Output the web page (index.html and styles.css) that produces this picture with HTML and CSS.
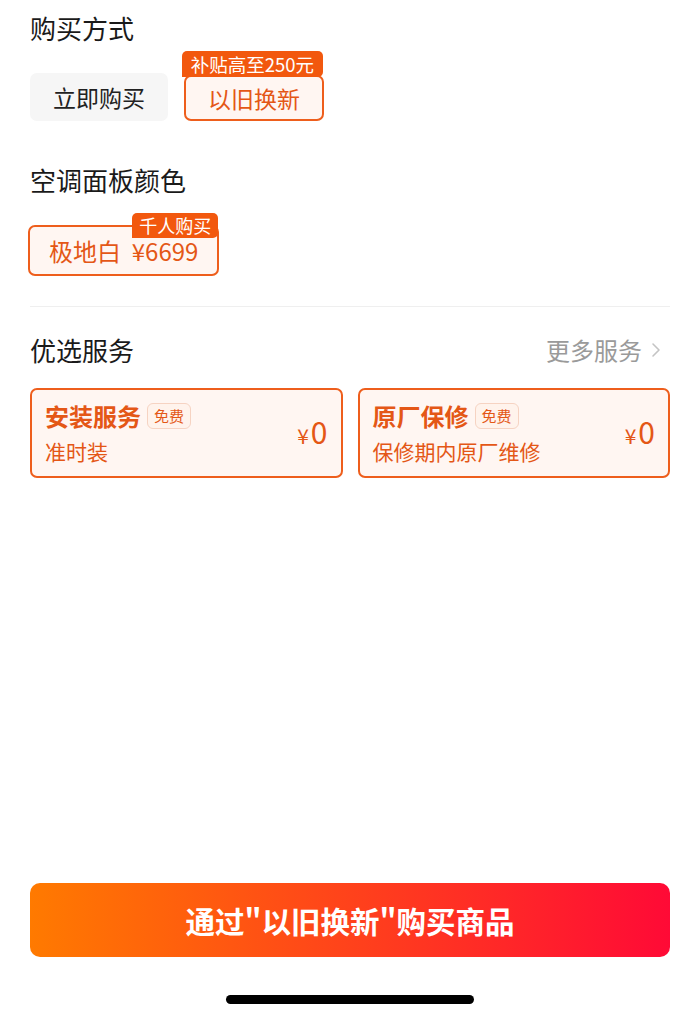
FILE: index.html
```html
<!DOCTYPE html>
<html lang="zh-CN">
<head>
  <meta charset="UTF-8">
  <meta name="viewport" content="width=device-width, initial-scale=1.0">
  <title>购买方式</title>
  <link rel="stylesheet" href="styles.css">
</head>
<body>
  <div class="page">
    <div class="main">
      <div class="sec-title first">购买方式</div>
      <div class="options">
        <div class="opt">立即购买</div>
        <div class="opt sel">以旧换新<span class="badge">补贴高至250元</span></div>
      </div>

      <div class="sec-title">空调面板颜色</div>
      <div class="options colors">
        <div class="opt sel color">极地白&nbsp;&nbsp;¥6699<span class="badge">千人购买</span></div>
      </div>

      <div class="divider"></div>

      <div class="sec-head">
        <div class="sec-title">优选服务</div>
        <div class="more">更多服务
          <svg width="12" height="18" viewBox="0 0 12 18"><path d="M3 3l6 6-6 6" fill="none" stroke="#c4c4c4" stroke-width="1.6" stroke-linecap="round" stroke-linejoin="round"/></svg>
        </div>
      </div>
      <div class="services">
        <div class="svc">
          <div class="svc-info">
            <div class="svc-name">安装服务<span class="tag">免费</span></div>
            <div class="svc-desc">准时装</div>
          </div>
          <div class="price"><span class="yen">¥</span>0</div>
        </div>
        <div class="svc">
          <div class="svc-info">
            <div class="svc-name">原厂保修<span class="tag">免费</span></div>
            <div class="svc-desc">保修期内原厂维修</div>
          </div>
          <div class="price"><span class="yen">¥</span>0</div>
        </div>
      </div>
    </div>

    <div class="footer">
      <button class="buy">通过"以旧换新"购买商品</button>
      <div class="home-bar"></div>
    </div>
  </div>
</body>
</html>
```

FILE: styles.css
```css
:root{--orange:#ee5e1c;--orange-text:#e45716;--card-bg:#fff6f2;--font:"Noto Sans CJK SC","Noto Sans",sans-serif}
html,body{margin:0;padding:0;background:#fff}
body{font-family:var(--font);color:#1a1a1a}
.page{display:flex;flex-direction:column;height:100vh;padding:0 30px;box-sizing:border-box}
.main{display:flex;flex-direction:column}
.sec-title{font-size:26px;line-height:32px;margin-top:43px;color:#1a1a1a}
.sec-title.first{margin-top:12px}
.options{display:flex;align-items:flex-end;gap:16px;margin-top:29px}
.opt{position:relative;box-sizing:border-box;height:48px;padding:0 23px;display:flex;align-items:center;font-size:23px;border-radius:7px;background:#f6f6f6;color:#222}
.opt.sel{height:46px;padding:0 22px;border:2px solid var(--orange);background:var(--card-bg);color:var(--orange-text)}
.badge{position:absolute;top:-26px;right:-1px;height:26px;line-height:26px;padding:0 9px;background:#f2580e;color:#fff;font-size:18.5px;border-radius:5px 5px 5px 0;white-space:nowrap}
.colors{margin-top:29px}
.opt.color{height:51px;padding:0 19px;margin-left:-2px;font-size:24px}
.opt.color .badge{top:-14px;height:25px;line-height:25px;padding:0 7px;font-size:18px}
.divider{height:1px;background:#efefef;margin-top:30px}
.sec-head{display:flex;justify-content:space-between;align-items:center;margin-top:27px}
.sec-head .sec-title{margin-top:0}
.more{display:flex;align-items:center;gap:8px;font-size:24px;line-height:32px;color:#9a9a9a;padding-right:8px}
.services{display:grid;grid-template-columns:1fr 1fr;gap:15px;margin-top:22px}
.svc{box-sizing:border-box;height:90px;border:2px solid var(--orange);border-radius:7px;background:var(--card-bg);padding:0 13px;display:flex;align-items:center;justify-content:space-between}
.svc-name{display:flex;align-items:center;font-size:24px;font-weight:bold;line-height:30px;color:var(--orange-text)}
.tag{margin-left:6px;font-size:15px;font-weight:normal;line-height:22px;padding:1px 6px;border:1px solid #f6d3c2;border-radius:6px;background:#fff3ec;color:var(--orange-text)}
.svc-desc{font-size:21px;line-height:28px;margin-top:6px;color:var(--orange-text)}
.price{font-size:30px;color:var(--orange-text);line-height:34px}
.yen{font-size:21px;margin-right:2px}
.footer{margin-top:auto;display:flex;flex-direction:column;align-items:center;padding-bottom:14px}
.buy{width:100%;height:74px;border:0;border-radius:10px;background:linear-gradient(90deg,#ff7a00,#ff0a36);color:#fff;font-family:var(--font);font-size:29.5px;font-weight:bold;cursor:pointer}
.home-bar{width:248px;height:9px;border-radius:5px;background:#000;margin-top:38px}
```
